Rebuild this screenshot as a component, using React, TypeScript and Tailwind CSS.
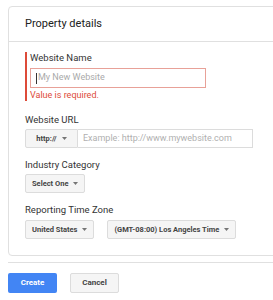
const Caret = () => (
  <svg width="5" height="3" viewBox="0 0 5 3" className="shrink-0">
    <path d="M0 0 L5 0 L2.5 3 Z" fill="#757575" />
  </svg>
)

type SelectProps = {
  label: string
  className?: string
}

const SelectBox = ({ label, className = "" }: SelectProps) => (
  <div
    className={`h-[19px] flex items-center gap-[5px] px-[6px] bg-[#f5f5f5] border border-[#dcdcdc] rounded-[2px] text-[7.5px] font-bold text-[#444] ${className}`}
  >
    <span>{label}</span>
    <Caret />
  </div>
)

const Label = ({ children }: { children: string }) => (
  <div className="text-[9.5px] leading-[12px] text-[#333] mb-[3px]">{children}</div>
)

export default function App() {
  return (
    <div
      className="w-[273px] h-[300px] bg-white overflow-hidden pl-[8px] pt-[6px]"
      style={{ fontFamily: "Roboto, 'Liberation Sans', sans-serif" }}
    >
      {/* Card */}
      <div className="w-[300px] border border-[#e0e0e0] rounded-[4px]">
        {/* Header */}
        <div className="h-[35px] flex items-center px-[16px] border-b border-[#e0e0e0]">
          <h2 className="text-[11px] text-[#212121]">Property details</h2>
        </div>

        {/* Body */}
        <div className="px-[16px] pt-[10px] pb-[16px]">
          {/* Website Name (error) */}
          <div className="border-l-2 border-[#dd4b39] pl-[3px]">
            <div className="text-[9.5px] leading-[12px] text-[#333] mb-[4px]">Website Name</div>
            <div className="w-[176px] h-[20px] border border-[#e8a198] flex items-center pl-[5px]">
              <span className="w-px h-[11px] bg-[#333]" />
              <span className="text-[9px] text-[#aaa] ml-px">My New Website</span>
            </div>
            <div className="text-[9px] leading-[12px] text-[#dd4b39] mt-px">Value is required.</div>
          </div>

          {/* Website URL */}
          <div className="mt-[13px]">
            <Label>Website URL</Label>
            <div className="flex h-[19px]">
              <div className="w-[53px] flex items-center justify-center gap-[5px] bg-[#f5f5f5] border border-[#dcdcdc] rounded-l-[2px] text-[7.5px] font-bold text-[#444]">
                <span>http://</span>
                <Caret />
              </div>
              <div className="w-[175px] border border-l-0 border-[#dcdcdc] flex items-center pl-[5px] text-[9px] text-[#b0b0b0]">
                Example: http://www.mywebsite.com
              </div>
            </div>
          </div>

          {/* Industry Category */}
          <div className="mt-[11px]">
            <Label>Industry Category</Label>
            <div className="flex">
              <SelectBox label="Select One" />
            </div>
          </div>

          {/* Reporting Time Zone */}
          <div className="mt-[11px]">
            <div className="text-[9.5px] leading-[12px] text-[#333] mb-[4px]">Reporting Time Zone</div>
            <div className="flex gap-[13px]">
              <SelectBox label="United States" />
              <SelectBox label="(GMT-08:00) Los Angeles Time" />
            </div>
          </div>
        </div>
      </div>

      {/* Divider */}
      <div className="mt-[6px] border-t border-[#e0e0e0]" />

      {/* Actions */}
      <div className="mt-[10px] flex gap-[13px]">
        <button className="w-[49px] h-[20px] bg-[#4285f4] rounded-[2px] text-white text-[8px] font-bold">
          Create
        </button>
        <button className="w-[49px] h-[20px] bg-[#f5f5f5] border border-[#dcdcdc] rounded-[2px] text-[#444] text-[8px] font-bold">
          Cancel
        </button>
      </div>
    </div>
  )
}
